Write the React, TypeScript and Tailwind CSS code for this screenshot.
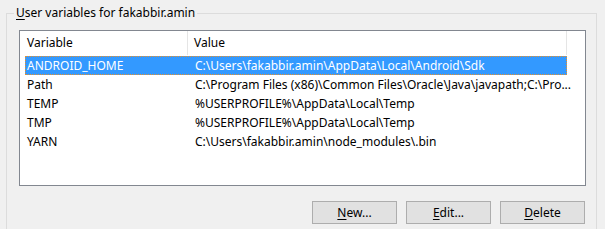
import React from "react";

const rows = [
  { name: "ANDROID_HOME", value: "C:\\Users\\fakabbir.amin\\AppData\\Local\\Android\\Sdk" },
  { name: "Path", value: "C:\\Program Files (x86)\\Common Files\\Oracle\\Java\\javapath;C:\\Pro..." },
  { name: "TEMP", value: "%USERPROFILE%\\AppData\\Local\\Temp" },
  { name: "TMP", value: "%USERPROFILE%\\AppData\\Local\\Temp" },
  { name: "YARN", value: "C:\\Users\\fakabbir.amin\\node_modules\\.bin" },
];

const WinButton = ({ mnemonic, rest }: { mnemonic: string; rest: string }) => (
  <button
    type="button"
    className="w-[85px] h-[23px] bg-[#e1e1e1] border border-[#adadad] text-[12px] leading-none text-black"
  >
    <span className="underline underline-offset-2">{mnemonic}</span>
    {rest}
  </button>
);

export default function App() {
  return (
    <div
      className="w-[605px] h-[229px] bg-[#f0f0f0] overflow-hidden text-[12px] text-black"
      style={{ fontFamily: '"Noto Sans", "Open Sans", sans-serif' }}
    >
      <div className="pt-[5px] pl-[6px]">
        <fieldset className="w-[591px] h-[260px] border border-[#dcdcdc] px-0">
          <legend className="ml-[7px] px-[2px] leading-[16px]">
            <span className="underline underline-offset-2">U</span>ser variables for fakabbir.amin
          </legend>

          <div className="pt-[9px] pl-[12px]">
            <div className="w-[567px] h-[156px] border border-[#828790] bg-white">
              {/* header */}
              <div className="flex h-[24px] w-[547px] items-center">
                <div className="w-[168px] shrink-0 h-full flex items-center pl-[7px] border-r border-[#e5e5e5]">
                  Variable
                </div>
                <div className="flex-1 h-full flex items-center pl-[6px] border-r border-[#e5e5e5]">
                  Value
                </div>
              </div>

              {/* rows */}
              <div className="mt-[1px] ml-[5px] w-[542px]">
                {rows.map((r, i) => (
                  <div
                    key={r.name}
                    className={
                      i === 0
                        ? "flex h-[19px] items-center bg-[#3399ff] text-white border border-dotted border-[#e8902a]"
                        : "flex h-[19px] items-center border border-transparent"
                    }
                  >
                    <div className="w-[162px] shrink-0 pl-[1px] whitespace-nowrap">{r.name}</div>
                    <div className="pl-[7px] whitespace-nowrap">{r.value}</div>
                  </div>
                ))}
              </div>
            </div>

            <div className="mt-[15px] w-[566px] flex justify-end gap-[9px]">
              <WinButton mnemonic="N" rest="ew..." />
              <WinButton mnemonic="E" rest="dit..." />
              <WinButton mnemonic="D" rest="elete" />
            </div>
          </div>
        </fieldset>
      </div>
    </div>
  );
}
